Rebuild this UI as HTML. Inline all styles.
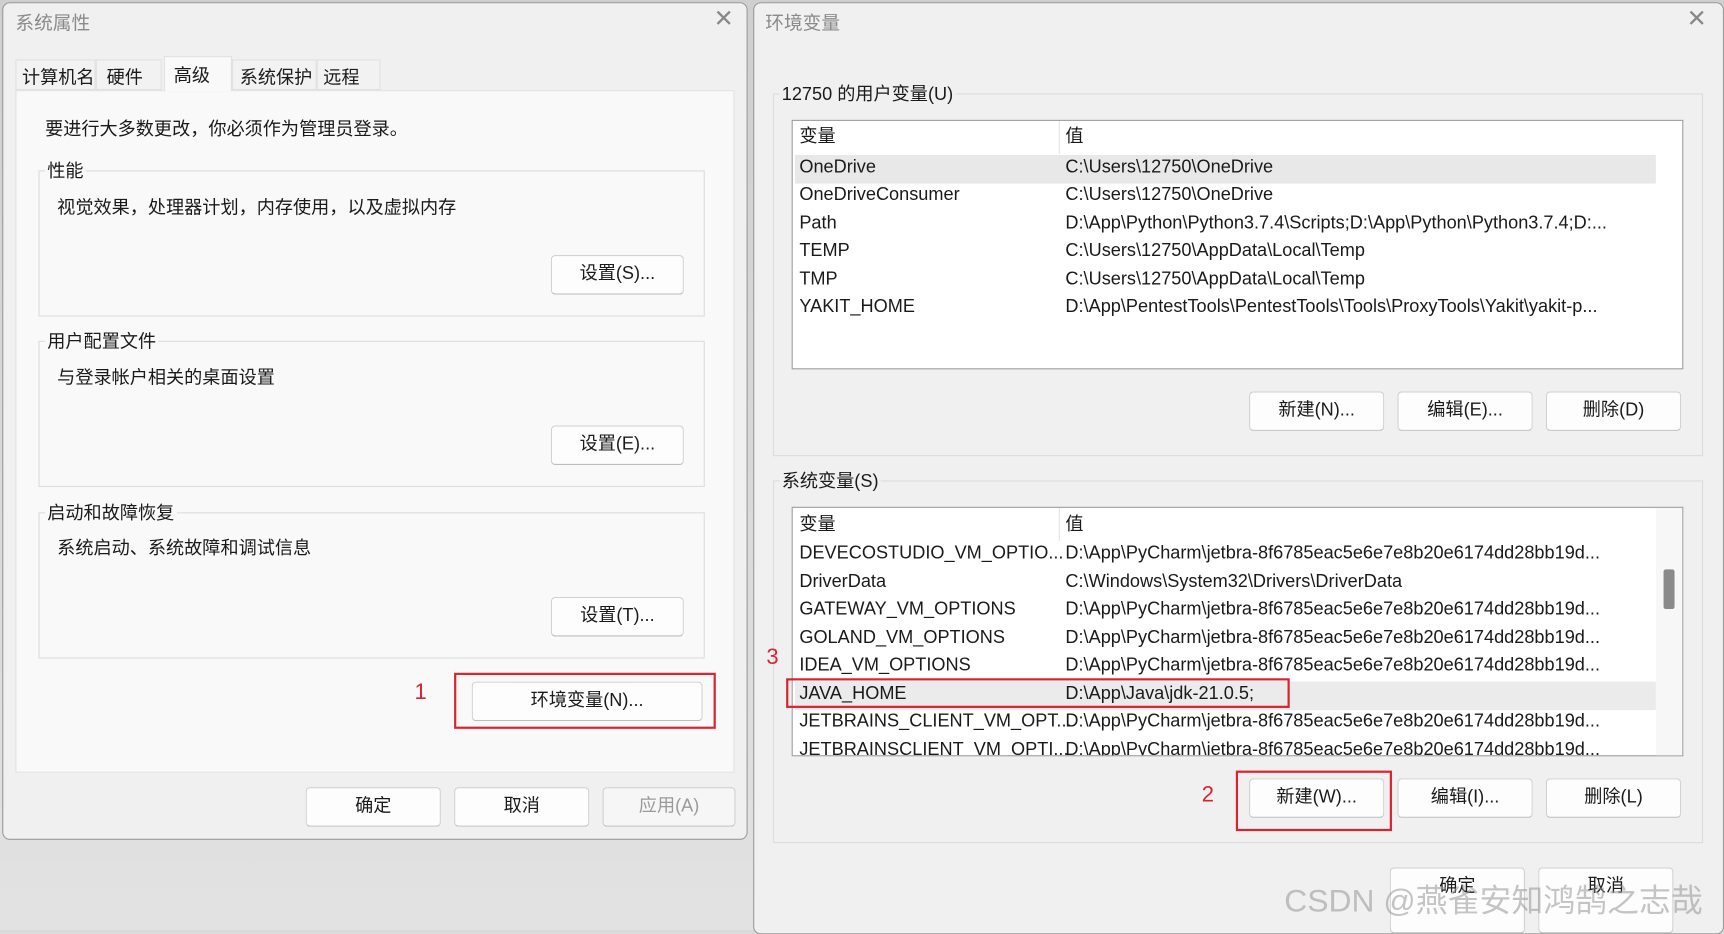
<!DOCTYPE html>
<html><head><meta charset="utf-8"><style>
*{box-sizing:border-box;margin:0;padding:0}
html,body{width:1724px;height:930px;overflow:hidden;background:#d9d9d9}
#w{position:absolute;left:0;top:0;width:1568px;height:846px;transform:scale(1.0995,1.0993);transform-origin:0 0;font-family:"Liberation Sans","Noto Sans CJK SC",sans-serif;font-size:16.5px;color:#1a1a1a;background:linear-gradient(#cfcfcf,#e2e2e2)}
.a{position:absolute;white-space:nowrap;margin-top:-3px}
.dlg{position:absolute;background:#f0f0f0;border:1px solid #9a9a9a;border-radius:7px}
.btn{position:absolute;background:#fdfdfd;border:1px solid #d0d0d0;border-bottom-color:#bdbdbd;border-radius:4px;text-align:center;line-height:33px;height:36px}
.grp{position:absolute;border:1px solid #dcdcdc}
.red{position:absolute;border:2px solid #d9232f}
.rn{position:absolute;color:#d9232f;font-size:20px;margin-top:-2px}
.list{position:absolute;background:#fff;border:1px solid #9c9c9c;overflow:hidden}
.row{position:absolute;left:6px;height:25px;line-height:23px;width:780px}
.row span{position:absolute;left:0}
.row span+span{left:242px}
</style></head><body><div id="w">
<div class="dlg" style="left:2px;top:2px;width:678px;height:762px;background:#f0f0f0">
<div class="a" style="left:11px;top:7px;color:#8a8a8a;font-size:17px">系统属性</div>
<div class="a" style="left:646px;top:4px;color:#888;font-size:22px;font-weight:300">✕</div>
<div style="position:absolute;left:11px;top:79px;width:654px;height:621px;background:#f9f9f9;border:1px solid #e2e2e2"></div>
<div class="a" style="left:11px;top:51px;width:73px;height:28px;background:#f2f2f2;border:1px solid #e0e0e0;padding:2px 5px;margin:0">计算机名</div>
<div class="a" style="left:84px;top:51px;width:60px;height:28px;background:#f2f2f2;border:1px solid #e0e0e0;padding:2px 9px;margin:0">硬件</div>
<div class="a" style="left:146px;top:48px;width:62px;height:32px;background:#f9f9f9;border:1px solid #e0e0e0;border-bottom:none;padding:3px 8px;margin:0">高级</div>
<div class="a" style="left:208px;top:51px;width:77px;height:28px;background:#f2f2f2;border:1px solid #e0e0e0;padding:2px 6px;margin:0">系统保护</div>
<div class="a" style="left:285px;top:51px;width:58px;height:28px;background:#f2f2f2;border:1px solid #e0e0e0;padding:2px 5px;margin:0">远程</div>
<div class="a" style="left:38px;top:104px">要进行大多数更改，你必须作为管理员登录。</div>
<div class="grp" style="left:32px;top:152px;width:606px;height:133px"></div>
<div class="a" style="left:38px;top:142px;background:#f9f9f9;padding:0 2px">性能</div>
<div class="a" style="left:49px;top:175px">视觉效果，处理器计划，内存使用，以及虚拟内存</div>
<div class="btn" style="left:498px;top:229px;width:121px">设置(S)...</div>
<div class="grp" style="left:32px;top:307px;width:606px;height:133px"></div>
<div class="a" style="left:38px;top:297px;background:#f9f9f9;padding:0 2px">用户配置文件</div>
<div class="a" style="left:49px;top:330px">与登录帐户相关的桌面设置</div>
<div class="btn" style="left:498px;top:384px;width:121px">设置(E)...</div>
<div class="grp" style="left:32px;top:463px;width:606px;height:133px"></div>
<div class="a" style="left:38px;top:453px;background:#f9f9f9;padding:0 2px">启动和故障恢复</div>
<div class="a" style="left:49px;top:485px">系统启动、系统故障和调试信息</div>
<div class="btn" style="left:498px;top:540px;width:121px">设置(T)...</div>
<div class="rn" style="left:374px;top:618px">1</div>
<div class="red" style="left:410px;top:609px;width:238px;height:51px"></div>
<div class="btn" style="left:426px;top:617px;width:210px">环境变量(N)...</div>
<div class="btn" style="left:275px;top:713px;width:123px">确定</div>
<div class="btn" style="left:410px;top:713px;width:123px">取消</div>
<div class="btn" style="left:545px;top:713px;width:121px;color:#9a9a9a;background:#f6f6f6">应用(A)</div>
</div>
<div class="dlg" style="left:685px;top:2px;width:883px;height:848px">
<div class="a" style="left:10px;top:7px;color:#8a8a8a;font-size:17px">环境变量</div>
<div class="a" style="left:848px;top:4px;color:#888;font-size:22px">✕</div>
<div class="grp" style="left:17px;top:82px;width:846px;height:330px"></div>
<div class="a" style="left:23px;top:72px;background:#f0f0f0;padding:0 2px">12750 的用户变量(U)</div>
<div class="list" style="left:34px;top:106px;width:811px;height:227px">
<div style="position:absolute;left:242px;top:0;width:1px;height:30px;background:#e4e4e4"></div>
<div style="position:absolute;left:2px;top:31px;width:783px;height:26px;background:#e8e8e8"></div>
<div class="row" style="top:3px"><span>变量</span><span>值</span></div>
<div class="row" style="top:31px"><span>OneDrive</span><span>C:\Users\12750\OneDrive</span></div>
<div class="row" style="top:56px"><span>OneDriveConsumer</span><span>C:\Users\12750\OneDrive</span></div>
<div class="row" style="top:82px"><span>Path</span><span>D:\App\Python\Python3.7.4\Scripts;D:\App\Python\Python3.7.4;D:...</span></div>
<div class="row" style="top:107px"><span>TEMP</span><span>C:\Users\12750\AppData\Local\Temp</span></div>
<div class="row" style="top:133px"><span>TMP</span><span>C:\Users\12750\AppData\Local\Temp</span></div>
<div class="row" style="top:158px"><span>YAKIT_HOME</span><span>D:\App\PentestTools\PentestTools\Tools\ProxyTools\Yakit\yakit-p...</span></div>
</div>
<div class="btn" style="left:450px;top:353px;width:123px">新建(N)...</div>
<div class="btn" style="left:585px;top:353px;width:123px">编辑(E)...</div>
<div class="btn" style="left:720px;top:353px;width:123px">删除(D)</div>
<div class="grp" style="left:17px;top:434px;width:846px;height:330px"></div>
<div class="a" style="left:23px;top:424px;background:#f0f0f0;padding:0 2px">系统变量(S)</div>
<div class="list" style="left:34px;top:458px;width:811px;height:227px">
<div style="position:absolute;left:242px;top:0;width:1px;height:30px;background:#e4e4e4"></div>
<div style="position:absolute;left:785px;top:0;width:24px;height:227px;background:#f7f7f7"></div>
<div style="position:absolute;left:792px;top:56px;width:10px;height:36px;background:#8a8a8a;border-radius:2px"></div>
<div style="position:absolute;left:2px;top:158px;width:783px;height:26px;background:#ebebeb"></div>
<div class="row" style="top:4px"><span>变量</span><span>值</span></div>
<div class="row" style="top:30px"><span>DEVECOSTUDIO_VM_OPTIO...</span><span>D:\App\PyCharm\jetbra-8f6785eac5e6e7e8b20e6174dd28bb19d...</span></div>
<div class="row" style="top:56px"><span>DriverData</span><span>C:\Windows\System32\Drivers\DriverData</span></div>
<div class="row" style="top:81px"><span>GATEWAY_VM_OPTIONS</span><span>D:\App\PyCharm\jetbra-8f6785eac5e6e7e8b20e6174dd28bb19d...</span></div>
<div class="row" style="top:107px"><span>GOLAND_VM_OPTIONS</span><span>D:\App\PyCharm\jetbra-8f6785eac5e6e7e8b20e6174dd28bb19d...</span></div>
<div class="row" style="top:132px"><span>IDEA_VM_OPTIONS</span><span>D:\App\PyCharm\jetbra-8f6785eac5e6e7e8b20e6174dd28bb19d...</span></div>
<div class="row" style="top:158px"><span>JAVA_HOME</span><span>D:\App\Java\jdk-21.0.5;</span></div>
<div class="row" style="top:183px"><span>JETBRAINS_CLIENT_VM_OPT...</span><span>D:\App\PyCharm\jetbra-8f6785eac5e6e7e8b20e6174dd28bb19d...</span></div>
<div class="row" style="top:209px"><span>JETBRAINSCLIENT_VM_OPTI...</span><span>D:\App\PyCharm\jetbra-8f6785eac5e6e7e8b20e6174dd28bb19d...</span></div>
</div>
<div class="rn" style="left:11px;top:586px">3</div>
<div class="red" style="left:29px;top:614px;width:458px;height:27px"></div>
<div class="rn" style="left:407px;top:711px">2</div>
<div class="red" style="left:438px;top:698px;width:142px;height:55px"></div>
<div class="btn" style="left:450px;top:705px;width:123px">新建(W)...</div>
<div class="btn" style="left:585px;top:705px;width:123px">编辑(I)...</div>
<div class="btn" style="left:720px;top:705px;width:123px">删除(L)</div>
<div class="btn" style="left:578px;top:786px;width:123px;height:60px">确定</div>
<div class="btn" style="left:713px;top:786px;width:123px;height:60px">取消</div>
<div class="a" style="left:482px;top:796px;font-size:29px;color:rgba(150,150,150,0.55)">CSDN @燕雀安知鸿鹄之志哉</div>
</div>
</div></body></html>
